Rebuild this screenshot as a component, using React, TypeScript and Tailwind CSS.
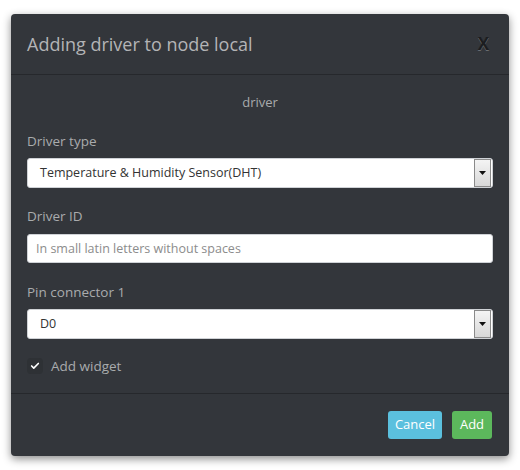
import { Check } from "lucide-react";

const font = { fontFamily: '"Open Sans", "Liberation Sans", sans-serif' };

function SelectBox({ value }: { value: string }) {
  return (
    <div className="flex h-[30px] w-full items-center rounded-[3px] border border-[#cfd2d6] bg-white pl-[12px] pr-px">
      <span className="flex-1 text-[12.5px] text-[#333]">{value}</span>
      <div className="flex h-[28px] w-[17px] items-center justify-center border border-[#8a8a8a] bg-gradient-to-b from-[#f4f4f4] to-[#d8d8d8]">
        <svg width="7" height="4" viewBox="0 0 7 4">
          <path d="M0 0h7L3.5 4z" fill="#111" />
        </svg>
      </div>
    </div>
  );
}

export default function App() {
  return (
    <div className="h-[470px] w-[520px] bg-white pl-[11px] pt-[14px]" style={font}>
      <div className="flex h-[442px] w-[498px] flex-col rounded-[4px] bg-[#33363b] shadow-[0_3px_8px_rgba(0,0,0,0.45)]">
        <div className="flex h-[61px] items-center justify-between border-b border-[#26282c] pl-4 pr-[20px]">
          <h1 className="text-[18px] text-[#b3b4b6]">Adding driver to node local</h1>
          <span className="text-[17px] font-bold text-[#1c1d20] [text-shadow:0_1px_0_#6a6c70]">X</span>
        </div>

        <div className="flex flex-1 flex-col px-4 pt-[17px]">
          <div className="text-center text-[13px] leading-[20px] text-[#a9abad]">driver</div>

          <label className="mt-[19px] text-[13.5px] leading-[20px] text-[#a9abad]">Driver type</label>
          <div className="mt-[7px]">
            <SelectBox value="Temperature & Humidity Sensor(DHT)" />
          </div>

          <label className="mt-[18px] text-[13.5px] leading-[20px] text-[#a9abad]">Driver ID</label>
          <input
            className="mt-[8px] h-[29px] w-full rounded-[3px] border border-[#cfd2d6] bg-white px-[8px] text-[12.5px] text-[#333] outline-none placeholder:text-[#8c8c8c]"
            placeholder="In small latin letters without spaces"
          />

          <label className="mt-[19px] text-[13.5px] leading-[20px] text-[#a9abad]">Pin connector 1</label>
          <div className="mt-[7px]">
            <SelectBox value="D0" />
          </div>

          <div className="mt-[17px] flex h-[20px] items-center gap-[8px]">
            <div className="flex h-[16px] w-[16px] items-center justify-center rounded-[4px] bg-[#2e3135]">
              <Check size={10} strokeWidth={4} color="#ffffff" />
            </div>
            <span className="text-[13.5px] text-[#a9abad]">Add widget</span>
          </div>
        </div>

        <div className="flex h-[63px] items-center justify-end gap-[10px] border-t border-[#26282c] pr-[17px]">
          <button className="h-[28px] w-[54px] rounded-[3px] bg-[#5bc0de] text-[13px] text-white">Cancel</button>
          <button className="h-[28px] w-[40px] rounded-[3px] bg-[#5cb85c] text-[13px] text-white">Add</button>
        </div>
      </div>
    </div>
  );
}
